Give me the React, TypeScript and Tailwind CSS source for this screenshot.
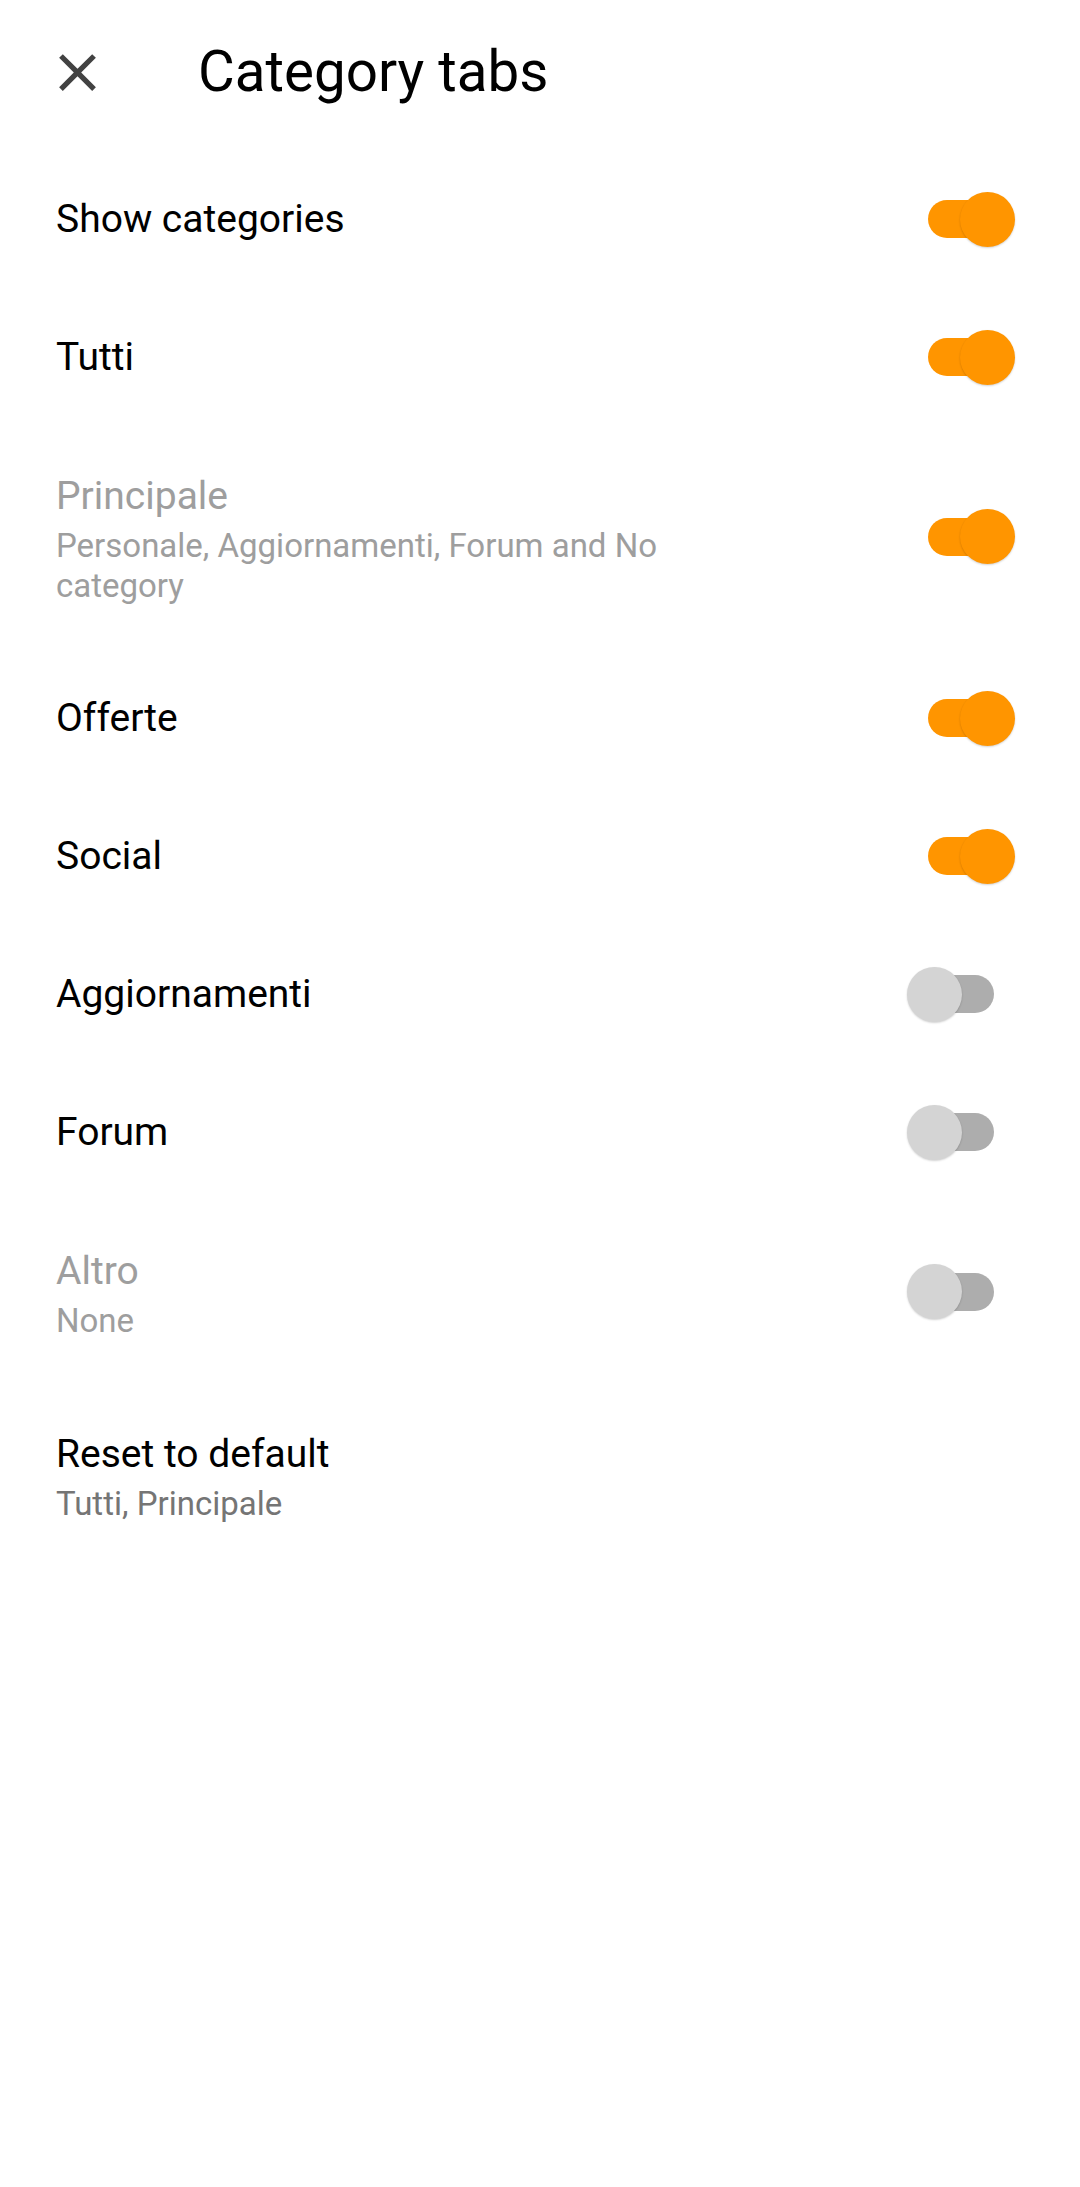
const font = { fontFamily: "Roboto, 'Noto Sans', sans-serif" }

const Toggle = ({ on }: { on: boolean }) => {
  return (
    <div className={"relative w-[66px] h-[38px] rounded-full mr-[86px] shrink-0 " + (on ? "bg-[#ff9500]" : "bg-[#adadad]")}>
      <div
        className={
          on
            ? "absolute top-[-8.5px] left-[32px] w-[55px] h-[55px] rounded-full bg-[#ff9500] shadow-[0_1px_2px_rgba(0,0,0,0.18)]"
            : "absolute top-[-8.5px] left-[-21px] w-[55px] h-[55px] rounded-full bg-[#d4d4d4] shadow-[0_1px_2px_rgba(0,0,0,0.18)]"
        }
      />
    </div>
  )
}

const Row = ({ title, on }: { title: string; on: boolean }) => {
  return (
    <div className="flex flex-row items-center justify-between h-[138px] pl-[56px]">
      <p className="text-[39px] leading-[46px] text-black">{title}</p>
      <Toggle on={on} />
    </div>
  )
}

const TwoLineRow = ({ title, summary, on, disabled }: { title: string; summary: string; on?: boolean; disabled?: boolean }) => {
  return (
    <div className="flex flex-row items-center justify-between pt-[47px] pb-[43px] pl-[56px]">
      <div className="max-w-[680px]">
        <p className={"text-[39px] leading-[46px] " + (disabled ? "text-[#9e9e9e]" : "text-black")}>{title}</p>
        <p className={"mt-[7px] text-[33px] leading-[40px] " + (disabled ? "text-[#9e9e9e]" : "text-[#757575]")}>{summary}</p>
      </div>
      {on !== undefined && (
        <div className="mb-[6px]">
          <Toggle on={on} />
        </div>
      )}
    </div>
  )
}

const App = () => {
  return (
    <div className="w-[1080px] min-h-[2187px] bg-white" style={font}>
      <div className="flex flex-row items-center h-[144px]">
        <div className="w-[63px] h-[63px] ml-[46px] text-[#424242]">
          <svg viewBox="0 0 24 24" width="63" height="63" fill="currentColor">
            <path d="M19 6.41L17.59 5 12 10.59 6.41 5 5 6.41 10.59 12 5 17.59 6.41 19 12 13.41 17.59 19 19 17.59 13.41 12z" />
          </svg>
        </div>
        <p className="ml-[89px] text-[56.5px] leading-[64px] text-black">Category tabs</p>
      </div>

      <div className="pt-[6px]">
        <Row title="Show categories" on={true} />
        <Row title="Tutti" on={true} />
        <TwoLineRow title="Principale" summary="Personale, Aggiornamenti, Forum and No category" on={true} disabled />
        <Row title="Offerte" on={true} />
        <Row title="Social" on={true} />
        <Row title="Aggiornamenti" on={false} />
        <Row title="Forum" on={false} />
        <TwoLineRow title="Altro" summary="None" on={false} disabled />
        <TwoLineRow title="Reset to default" summary="Tutti, Principale" />
      </div>
    </div>
  )
}

export default App
